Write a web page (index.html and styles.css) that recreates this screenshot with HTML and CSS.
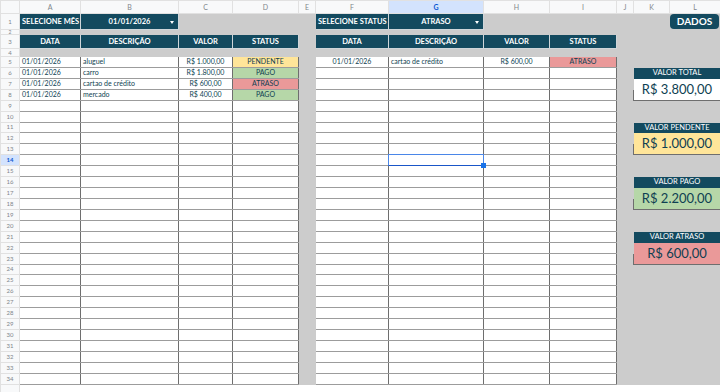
FILE: index.html
```html
<!DOCTYPE html>
<html lang="pt-BR">
<head>
  <meta charset="UTF-8">
  <title>Controle de Contas</title>
  <link rel="stylesheet" href="styles.css">
</head>
<body>
  <table class="sheet">
    <colgroup>
      <col class="c-rh"><col class="c-a"><col class="c-b"><col class="c-c"><col class="c-d"><col class="c-e">
      <col class="c-f"><col class="c-g"><col class="c-h"><col class="c-i"><col class="c-j"><col class="c-k"><col class="c-l">
    </colgroup>

    <!-- column letters -->
    <tr class="colhead">
      <th></th><th>A</th><th>B</th><th>C</th><th>D</th><th>E</th><th>F</th><th class="active">G</th><th>H</th><th>I</th><th>J</th><th>K</th><th>L</th>
    </tr>

    <!-- filters -->
    <tr class="r1">
      <th>1</th>
      <td class="d">SELECIONE MÊS</td>
      <td class="d pick">01/01/2026</td>
      <td class="g" colspan="3"></td>
      <td class="d">SELECIONE STATUS</td>
      <td class="d pick">ATRASO</td>
      <td class="g" colspan="4"></td>
      <td class="g"><div class="btn">DADOS</div></td>
    </tr>
    <tr class="r2"><th>2</th><td class="g" colspan="12"></td></tr>

    <!-- table headers -->
    <tr class="r3">
      <th>3</th>
      <td class="d">DATA</td><td class="d">DESCRIÇÃO</td><td class="d">VALOR</td><td class="d">STATUS</td>
      <td class="g"></td>
      <td class="d">DATA</td><td class="d">DESCRIÇÃO</td><td class="d">VALOR</td><td class="d">STATUS</td>
      <td class="g" colspan="3"></td>
    </tr>
    <tr class="r4"><th>4</th><td class="g" colspan="12"></td></tr>

    <!-- data -->
    <tr><th>5</th><td>01/01/2026</td><td>aluguel</td><td class="mid">R$ 1.000,00</td><td class="mid pend">PENDENTE</td><td class="g"></td><td class="mid">01/01/2026</td><td>cartao de crédito</td><td class="mid">R$ 600,00</td><td class="mid late">ATRASO</td><td class="g" colspan="3"></td></tr>
    <tr><th>6</th><td>01/01/2026</td><td>carro</td><td class="mid">R$ 1.800,00</td><td class="mid paid">PAGO</td><td class="g"></td><td></td><td></td><td></td><td></td><td class="g"></td><td class="card-head" colspan="2">VALOR TOTAL</td></tr>
    <tr><th>7</th><td>01/01/2026</td><td>cartao de crédito</td><td class="mid">R$ 600,00</td><td class="mid late">ATRASO</td><td class="g"></td><td></td><td></td><td></td><td></td><td class="g"></td><td class="card-val" colspan="2" rowspan="2">R$ 3.800,00</td></tr>
    <tr><th>8</th><td>01/01/2026</td><td>mercado</td><td class="mid">R$ 400,00</td><td class="mid paid">PAGO</td><td class="g"></td><td></td><td></td><td></td><td></td><td class="g"></td></tr>
    <tr><th>9</th><td></td><td></td><td></td><td></td><td class="g"></td><td></td><td></td><td></td><td></td><td class="g" colspan="3"></td></tr>
    <tr><th>10</th><td></td><td></td><td></td><td></td><td class="g"></td><td></td><td></td><td></td><td></td><td class="g" colspan="3"></td></tr>
    <tr><th>11</th><td></td><td></td><td></td><td></td><td class="g"></td><td></td><td></td><td></td><td></td><td class="g"></td><td class="card-head" colspan="2">VALOR PENDENTE</td></tr>
    <tr><th>12</th><td></td><td></td><td></td><td></td><td class="g"></td><td></td><td></td><td></td><td></td><td class="g"></td><td class="card-val pend" colspan="2" rowspan="2">R$ 1.000,00</td></tr>
    <tr><th>13</th><td></td><td></td><td></td><td></td><td class="g"></td><td></td><td></td><td></td><td></td><td class="g"></td></tr>
    <tr><th class="active">14</th><td></td><td></td><td></td><td></td><td class="g"></td><td></td><td class="sel"></td><td></td><td></td><td class="g" colspan="3"></td></tr>
    <tr><th>15</th><td></td><td></td><td></td><td></td><td class="g"></td><td></td><td></td><td></td><td></td><td class="g" colspan="3"></td></tr>
    <tr><th>16</th><td></td><td></td><td></td><td></td><td class="g"></td><td></td><td></td><td></td><td></td><td class="g"></td><td class="card-head" colspan="2">VALOR PAGO</td></tr>
    <tr><th>17</th><td></td><td></td><td></td><td></td><td class="g"></td><td></td><td></td><td></td><td></td><td class="g"></td><td class="card-val paid" colspan="2" rowspan="2">R$ 2.200,00</td></tr>
    <tr><th>18</th><td></td><td></td><td></td><td></td><td class="g"></td><td></td><td></td><td></td><td></td><td class="g"></td></tr>
    <tr><th>19</th><td></td><td></td><td></td><td></td><td class="g"></td><td></td><td></td><td></td><td></td><td class="g" colspan="3"></td></tr>
    <tr><th>20</th><td></td><td></td><td></td><td></td><td class="g"></td><td></td><td></td><td></td><td></td><td class="g" colspan="3"></td></tr>
    <tr><th>21</th><td></td><td></td><td></td><td></td><td class="g"></td><td></td><td></td><td></td><td></td><td class="g"></td><td class="card-head" colspan="2">VALOR ATRASO</td></tr>
    <tr><th>22</th><td></td><td></td><td></td><td></td><td class="g"></td><td></td><td></td><td></td><td></td><td class="g"></td><td class="card-val late" colspan="2" rowspan="2">R$ 600,00</td></tr>
    <tr><th>23</th><td></td><td></td><td></td><td></td><td class="g"></td><td></td><td></td><td></td><td></td><td class="g"></td></tr>
    <tr><th>24</th><td></td><td></td><td></td><td></td><td class="g"></td><td></td><td></td><td></td><td></td><td class="g" colspan="3"></td></tr>
    <tr><th>25</th><td></td><td></td><td></td><td></td><td class="g"></td><td></td><td></td><td></td><td></td><td class="g" colspan="3"></td></tr>
    <tr><th>26</th><td></td><td></td><td></td><td></td><td class="g"></td><td></td><td></td><td></td><td></td><td class="g" colspan="3"></td></tr>
    <tr><th>27</th><td></td><td></td><td></td><td></td><td class="g"></td><td></td><td></td><td></td><td></td><td class="g" colspan="3"></td></tr>
    <tr><th>28</th><td></td><td></td><td></td><td></td><td class="g"></td><td></td><td></td><td></td><td></td><td class="g" colspan="3"></td></tr>
    <tr><th>29</th><td></td><td></td><td></td><td></td><td class="g"></td><td></td><td></td><td></td><td></td><td class="g" colspan="3"></td></tr>
    <tr><th>30</th><td></td><td></td><td></td><td></td><td class="g"></td><td></td><td></td><td></td><td></td><td class="g" colspan="3"></td></tr>
    <tr><th>31</th><td></td><td></td><td></td><td></td><td class="g"></td><td></td><td></td><td></td><td></td><td class="g" colspan="3"></td></tr>
    <tr><th>32</th><td></td><td></td><td></td><td></td><td class="g"></td><td></td><td></td><td></td><td></td><td class="g" colspan="3"></td></tr>
    <tr><th>33</th><td></td><td></td><td></td><td></td><td class="g"></td><td></td><td></td><td></td><td></td><td class="g" colspan="3"></td></tr>
    <tr><th>34</th><td></td><td></td><td></td><td></td><td class="g"></td><td></td><td></td><td></td><td></td><td class="g" colspan="3"></td></tr>
    <tr class="blank"><th></th><td colspan="12"></td></tr>
  </table>
</body>
</html>
```

FILE: styles.css
```css
/* Global */
* { margin: 0; padding: 0; box-sizing: border-box; }
body {
  background: #fff;
  font-family: 'Lato', 'Noto Sans', sans-serif;
  color: #0f3f52;
  overflow: hidden;
}

/* ---------- Grid ---------- */
.sheet {
  border-collapse: collapse;
  table-layout: fixed;
  width: 720px;
}
.c-rh { width: 19px; }
.c-a { width: 61px; }
.c-b { width: 98px; }
.c-c { width: 54px; }
.c-d { width: 66px; }
.c-e { width: 17px; }
.c-f { width: 73px; }
.c-g { width: 95px; }
.c-h { width: 66px; }
.c-i { width: 67px; }
.c-j { width: 17px; }
.c-k { width: 36px; }
.c-l { width: 51px; }

.sheet td, .sheet th {
  height: 10.93px;
  padding: 0 2px;
  font-size: 7px;
  line-height: 1;
  white-space: nowrap;
  overflow: hidden;
  border: 1px solid #9c9c9c;
  border-left-color: #6e6e6e;
  border-right-color: #6e6e6e;
}

/* row & column labels */
.sheet th {
  background: #f8f9fa;
  color: #80868b;
  font-weight: normal;
  font-size: 6px;
  text-align: center;
  border-color: #e1e1e1;
}
.colhead th { height: 13px; font-size: 7px; }
.sheet th.active { background: #d3e3fd; color: #0b57d0; font-weight: bold; }

.r1 td, .r1 th { height: 15px; }
.sheet .r2 td, .sheet .r2 th { height: 4px; font-size: 5px; line-height: 4px; }
.r3 td, .r3 th { height: 14px; }
.r4 td, .r4 th { height: 8px; }
.blank td { border-color: #e1e1e1; }

/* grey filler */
.sheet td.g { background: #cccccc; border-color: #cccccc; }

/* dark header cells */
.sheet td.d {
  background: #134a5f;
  color: #fff;
  font-weight: bold;
  font-size: 7.5px;
  text-align: center;
  border-color: #cfd6da;
}
.pick { position: relative; }
.pick::after {
  content: '';
  position: absolute;
  right: 4px;
  top: 50%;
  margin-top: -1px;
  border-left: 2.5px solid transparent;
  border-right: 2.5px solid transparent;
  border-top: 3px solid #fff;
}

.mid { text-align: center; }
.pend { background: #ffe599; }
.paid { background: #b6d7a8; }
.late { background: #ea9999; }

/* DADOS button */
.btn {
  background: #134a5f;
  color: #fff;
  font-weight: bold;
  font-size: 10px;
  text-align: center;
  border-radius: 4px;
  height: 15px;
  line-height: 15px;
  margin: 0 -1px 0 -2px;
}

/* summary cards */
.sheet td.card-head {
  background: #134a5f;
  color: #fff;
  text-align: center;
  font-size: 7.5px;
  border-color: #134a5f;
}
.sheet td.card-val {
  background: #fff;
  text-align: center;
  font-size: 13px;
  border-color: #6e6e6e;
}
.sheet td.card-val.pend { background: #ffe599; }
.sheet td.card-val.paid { background: #b6d7a8; }
.sheet td.card-val.late { background: #ea9999; }

/* current selection */
.sheet td.sel { position: relative; overflow: visible; }
.sel::after {
  content: '';
  position: absolute;
  inset: -1px;
  border: 1px solid #4a86e8;
  border-bottom-color: #1a56c8;
}
.sel::before {
  content: '';
  position: absolute;
  right: -3px;
  bottom: -3px;
  width: 5px;
  height: 5px;
  background: #1a73e8;
  z-index: 1;
}
```
